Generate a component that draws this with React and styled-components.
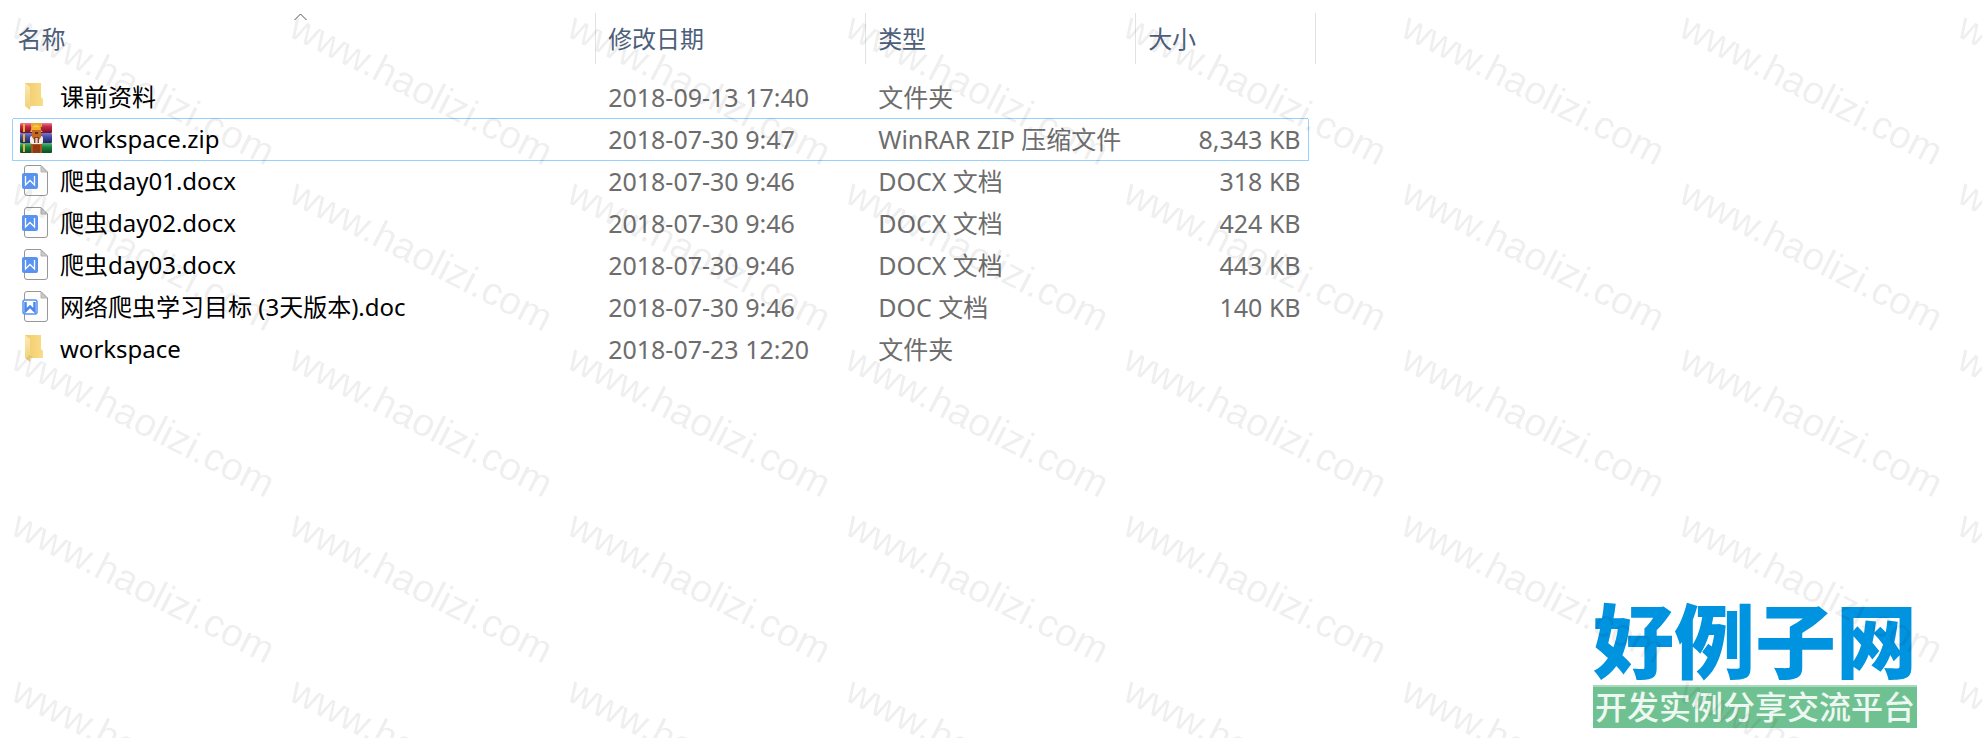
import React, {useState} from "react";
import styled, {createGlobalStyle} from "styled-components";

const GlobalStyle = createGlobalStyle`
  body {
    margin: 0;
    background: #fff;
    font-family: "Noto Sans", "Open Sans", "Noto Sans CJK SC", sans-serif;
  }
`
const Page = styled.main`
  position: relative;
  min-height: 100vh;
  box-sizing: border-box;
  padding: 13px 0 12px 12px;
  overflow: hidden;
`
const Table = styled.table`
  width: 66.2%;
  table-layout: fixed;
  border-collapse: collapse;
  font-size: 24px;
  line-height: 32px;
  white-space: nowrap;
`
const Col = styled.col`
  width: ${props => props.$width};
`
const HeadCell = styled.th`
  padding: 0 0 12px;
  font-weight: 400;
`
const HeadButton = styled.button`
  position: relative;
  display: flex;
  align-items: center;
  width: 100%;
  height: 51px;
  padding: 0 0 0 ${props => props.$first ? "5px" : "12px"};
  border: 0;
  border-right: 1px solid #e2e2e2;
  background: none;
  color: #4c607a;
  font: inherit;
  text-align: left;
`
const SortMark = styled.svg`
  position: absolute;
  top: 0;
  left: calc(50% - 10px);
  width: 13px;
  height: 8px;
`
const Row = styled.tr`
  height: 42px;
`
const Cell = styled.td`
  padding: 0 0 0 12px;
  color: #6d6d6d;
  font-size: 25px;
  text-align: ${props => props.$right ? "right" : "left"};
  border-style: solid;
  border-color: ${props => props.$selected ? "#99d1ff" : "transparent"};
  border-width: ${props => props.$selected ? "1px 0" : "0"};
`
const NameCell = styled(Cell)`
  padding-left: 6px;
  color: #000;
  font-size: 24px;
  border-left-width: 1px;
`
const SizeCell = styled(Cell)`
  padding-right: 7px;
  border-right-width: 1px;
`
const NameBox = styled.div`
  display: flex;
  align-items: center;
  gap: 7px;
`
const Icon = styled.svg`
  flex: none;
  width: 34px;
  height: 34px;
`
const Watermarks = styled.div`
  position: absolute;
  inset: 0;
  display: grid;
  grid-template-columns: repeat(8, 278px);
  grid-auto-rows: 166px;
  overflow: hidden;
  pointer-events: none;
  user-select: none;
`
const Watermark = styled.span`
  padding: 6px 0 0 24px;
  color: rgba(0, 0, 0, 0.08);
  font-family: "Liberation Sans", Arial, sans-serif;
  font-size: 39px;
  line-height: 40px;
  white-space: nowrap;
  transform: rotate(27deg);
  transform-origin: 24px 6px;
`
const Brand = styled.a`
  position: absolute;
  right: 65px;
  bottom: 10px;
  display: flex;
  flex-direction: column;
  text-decoration: none;
  font-family: "Noto Sans CJK SC", sans-serif;
`
const BrandName = styled.span`
  margin-bottom: 4px;
  color: #0093e0;
  font-size: 81px;
  line-height: 88px;
  font-weight: 900;
`
const BrandLine = styled.span`
  padding-bottom: 4px;
  background: #70c191;
  border-top: 2px solid #a9d9bd;
  color: #eef8f2;
  font-size: 32px;
  line-height: 37px;
  font-weight: 500;
  text-align: center;
`

const files = [
  {name: "课前资料", date: "2018-09-13 17:40", type: "文件夹", size: "", icon: "folder"},
  {name: "workspace.zip", date: "2018-07-30 9:47", type: "WinRAR ZIP 压缩文件", size: "8,343 KB", icon: "zip"},
  {name: "爬虫day01.docx", date: "2018-07-30 9:46", type: "DOCX 文档", size: "318 KB", icon: "docx"},
  {name: "爬虫day02.docx", date: "2018-07-30 9:46", type: "DOCX 文档", size: "424 KB", icon: "docx"},
  {name: "爬虫day03.docx", date: "2018-07-30 9:46", type: "DOCX 文档", size: "443 KB", icon: "docx"},
  {name: "网络爬虫学习目标 (3天版本).doc", date: "2018-07-30 9:46", type: "DOC 文档", size: "140 KB", icon: "doc"},
  {name: "workspace", date: "2018-07-23 12:20", type: "文件夹", size: "", icon: "folder"}
];

function FolderIcon() {
  return (
    <Icon viewBox="0 0 34 34" aria-hidden="true">
      <defs>
        <linearGradient id="folderBack" x1="0" x2="1">
          <stop offset="0" stopColor="#efcb6c" />
          <stop offset="1" stopColor="#fbdc88" />
        </linearGradient>
        <linearGradient id="folderFront" x1="0" x2="0" y1="0" y2="1">
          <stop offset="0" stopColor="#fdeab2" />
          <stop offset="1" stopColor="#f0cf78" />
        </linearGradient>
      </defs>
      <path d="M6 3H22V17L24 19V26H6Z" fill="url(#folderBack)" />
      <path d="M6 3L11 7V21L12 23L11 30L6 26Z" fill="url(#folderFront)" />
    </Icon>
  );
}

function ZipIcon() {
  return (
    <Icon viewBox="0 0 34 34" aria-hidden="true">
      <defs>
        <linearGradient id="bookRed" x1="0" x2="0" y1="0" y2="1">
          <stop offset="0" stopColor="#ef7d95" />
          <stop offset="0.35" stopColor="#c9274b" />
          <stop offset="1" stopColor="#730d27" />
        </linearGradient>
        <linearGradient id="bookBlue" x1="0" x2="0" y1="0" y2="1">
          <stop offset="0" stopColor="#777bc9" />
          <stop offset="0.4" stopColor="#454ba8" />
          <stop offset="1" stopColor="#22265f" />
        </linearGradient>
        <linearGradient id="bookGreen" x1="0" x2="0" y1="0" y2="1">
          <stop offset="0" stopColor="#5bb57a" />
          <stop offset="0.4" stopColor="#16853f" />
          <stop offset="1" stopColor="#0a4c22" />
        </linearGradient>
      </defs>
      <rect x="1" y="1" width="32" height="10" rx="1" fill="url(#bookRed)" />
      <rect x="1" y="11" width="32" height="10" rx="1" fill="url(#bookBlue)" />
      <rect x="1" y="21" width="32" height="10" rx="1" fill="url(#bookGreen)" />
      <path d="M4 2h2v8H4zM4 12h2v8H4zM4 22h2v8H4z" fill="#eab52f" />
      <rect x="12" y="1" width="11" height="4" fill="#e0aa2c" />
      <rect x="12" y="21" width="11" height="10" fill="#b5521c" />
      <rect x="14" y="23" width="7" height="8" fill="#8e3a12" />
      <rect x="11" y="14" width="13" height="8" rx="2" fill="#f4eee6" />
      <path d="M12 8Q12 2 17 2T22 8L24 10H11Z" fill="#f3b02e" />
      <path d="M13 8H22V15L20 18H15L13 15Z" fill="#c4691f" />
      <rect x="16" y="10" width="3" height="2" fill="#5c2a10" />
      <path d="M15 5Q17 3 20 5" stroke="#fbd777" fill="none" />
      <rect x="15" y="15" width="5" height="6" fill="#8a3d22" />
      <path d="M17 16V21M18 16V21" stroke="#fff" />
    </Icon>
  );
}

function DocIcon({outlined}) {
  return (
    <Icon viewBox="0 0 34 34" aria-hidden="true">
      <path d="M8 1.5H22L28.500 8V29Q28.500 31.500 26 31.500H8Q5.500 31.500 5.500 29V4Q5.500 1.500 8 1.500Z" fill="#fdfdfd" stroke="#979797" />
      <path d="M22 2V8H28Z" fill="#c9c9c9" stroke="#b5b5b5" />
      {outlined
        ? <rect x="4" y="10" width="14" height="14" rx="2" fill="#fff" stroke="#5a92f0" strokeWidth="1.500" />
        : <rect x="3" y="9" width="16" height="16" rx="2" fill="#5a92f0" />}
      <path
        d="M6.500 12V21L11 16.500L15.500 21V12"
        fill="none"
        stroke={outlined ? "#4c86e8" : "#fff"}
        strokeWidth={outlined ? 2.5 : 1.3}
      />
    </Icon>
  );
}

function FileIcon({kind}) {
  if (kind === "folder") return <FolderIcon />;
  if (kind === "zip") return <ZipIcon />;
  return <DocIcon outlined={kind === "doc"} />;
}

export default function App() {
  const [selected, setSelected] = useState("workspace.zip");

  return (
    <Page>
      <GlobalStyle />
      <Table>
        <colgroup>
          <Col />
          <Col $width="270px" />
          <Col $width="270px" />
          <Col $width="172px" />
          <Col $width="8px" />
        </colgroup>
        <thead>
          <tr>
            <HeadCell aria-sort="ascending">
              <HeadButton type="button" $first>
                名称
                <SortMark viewBox="0 0 13 8" aria-hidden="true">
                  <path d="M0.500 7L6.500 1L12.500 7" fill="none" stroke="#555" />
                </SortMark>
              </HeadButton>
            </HeadCell>
            <HeadCell><HeadButton type="button">修改日期</HeadButton></HeadCell>
            <HeadCell><HeadButton type="button">类型</HeadButton></HeadCell>
            <HeadCell colSpan={2}><HeadButton type="button">大小</HeadButton></HeadCell>
          </tr>
        </thead>
        <tbody>
          {files.map(file => {
            const active = file.name === selected;
            return (
              <Row key={file.name} onClick={() => setSelected(file.name)}>
                <NameCell $selected={active}>
                  <NameBox>
                    <FileIcon kind={file.icon} />
                    {file.name}
                  </NameBox>
                </NameCell>
                <Cell $selected={active}>{file.date}</Cell>
                <Cell $selected={active}>{file.type}</Cell>
                <SizeCell $right $selected={active}>{file.size}</SizeCell>
              </Row>
            );
          })}
        </tbody>
      </Table>

      <Brand href="#">
        <BrandName>好例子网</BrandName>
        <BrandLine>开发实例分享交流平台</BrandLine>
      </Brand>

      <Watermarks aria-hidden="true">
        {Array.from({length: 40}, (_, i) => <Watermark key={i}>www.haolizi.com</Watermark>)}
      </Watermarks>
    </Page>
  );
};
